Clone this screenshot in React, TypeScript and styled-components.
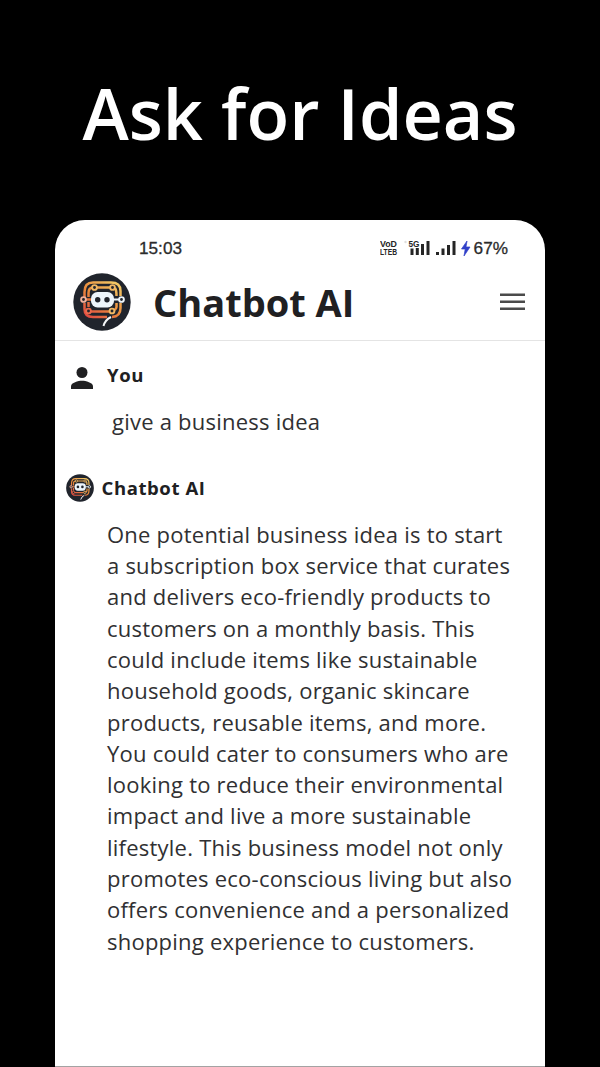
import React from 'react';
import styled, { createGlobalStyle } from 'styled-components';

const GlobalStyle = createGlobalStyle`
  * { box-sizing: border-box; }
  body { margin: 0; background: #000; font-family: 'Open Sans', 'Noto Sans', sans-serif; }
`;

const Page = styled.main`
  display: flex;
  flex-direction: column;
  align-items: center;
  width: 600px;
  height: 1067px;
  overflow: hidden;
  background: #000;
`;

const Headline = styled.h1`
  margin: 0;
  height: 220px;
  padding-top: 65px;
  color: #fff;
  font-size: 70px;
  font-weight: 600;
  line-height: 96px;
  white-space: nowrap;
`;

const Phone = styled.section`
  display: flex;
  flex-direction: column;
  width: 490px;
  height: 847px;
  background: #fff;
  border-bottom: 1px solid #a3a3a3;
  border-radius: 30px 30px 0 0;
  color: #202022;
`;

const StatusBar = styled.div`
  display: flex;
  align-items: center;
  justify-content: space-between;
  height: 44px;
  padding: 12px 37px 0 84px;
  font-family: 'Liberation Sans', sans-serif;
  font-size: 17.2px;
  line-height: 20px;
  color: #2b2b2b;
  -webkit-text-stroke: 0.3px #2b2b2b;
`;

const StatusRight = styled.div`
  display: flex;
  align-items: center;
  gap: 2px;
`;

const Header = styled.header`
  display: flex;
  align-items: center;
  height: 77px;
  padding: 0 20px 1px 18px;
  border-bottom: 1px solid #e4e4e4;
`;

const Brand = styled.h2`
  flex: 1;
  margin: 0 0 0 22px;
  font-size: 38px;
  font-weight: 700;
  line-height: 52px;
  white-space: nowrap;
`;

const Message = styled.article<{ $top: number; $left: number }>`
  padding: ${p => p.$top}px 0 0 ${p => p.$left}px;
`;

const Author = styled.div<{ $gap: number }>`
  display: flex;
  align-items: center;
  gap: ${p => p.$gap}px;
  height: 28px;
  font-size: 18.5px;
  font-weight: 700;
  line-height: 26px;
  letter-spacing: 0.6px;
  white-space: nowrap;
`;

const Name = styled.span<{ $lift?: number }>`
  padding-bottom: ${p => p.$lift || 0}px;
`;

const Copy = styled.p<{ $indent: number; $top: number }>`
  margin: ${p => p.$top}px 0 0 ${p => p.$indent}px;
  font-size: 22px;
  line-height: 31.3px;
  letter-spacing: 0.23px;
  color: #303032;
`;

const Line = styled.span`
  display: block;
  white-space: nowrap;
`;

const answer = [
  'One potential business idea is to start',
  'a subscription box service that curates',
  'and delivers eco-friendly products to',
  'customers on a monthly basis. This',
  'could include items like sustainable',
  'household goods, organic skincare',
  'products, reusable items, and more.',
  'You could cater to consumers who are',
  'looking to reduce their environmental',
  'impact and live a more sustainable',
  'lifestyle. This business model not only',
  'promotes eco-conscious living but also',
  'offers convenience and a personalized',
  'shopping experience to customers.',
];

const SignalIcons = () => (
  <svg width="92" height="20" viewBox="0 0 92 20" fill="#252525" stroke="none">
    <g fontFamily="Liberation Sans, sans-serif" fontWeight="700" fontSize="8.8">
      <text x="0" y="9" textLength="17" lengthAdjust="spacingAndGlyphs">VoD</text>
      <text x="0" y="17" textLength="17" lengthAdjust="spacingAndGlyphs">LTEB</text>
      <text x="28.500" y="9" textLength="11" lengthAdjust="spacingAndGlyphs">5G</text>
    </g>
    <circle cx="25.500" cy="4" r="1.200" fill="#dedede" />
    <path d="M30.500 10.500h3V17h-3zM35.800 10h3v7h-3zM41 6h3v11h-3zM46.500 3h3v14h-3z" />
    <path d="M56 14h3v3h-3zM61.500 10.500h3V17h-3zM67 7h3v10h-3zM72.500 3h3v14h-3z" />
    <path d="M87 3 81.500 11h3.700L84 18l6-9h-4z" fill="#3140c8" stroke="#3140c8" strokeWidth=".7" />
  </svg>
);

const BotLogo = ({ size }: { size: number }) => (
  <svg width={size} height={size} viewBox="0 0 58 58">
    <defs>
      <linearGradient id={`trace${size}`} gradientUnits="userSpaceOnUse" x1="14" y1="44" x2="40" y2="9">
        <stop offset="0" stopColor="#e04a42" />
        <stop offset=".5" stopColor="#ea8a3c" />
        <stop offset="1" stopColor="#f2c663" />
      </linearGradient>
    </defs>
    <circle cx="29" cy="29" r="28.700" fill="#20242c" />
    <g fill="none" stroke={`url(#trace${size})`} strokeWidth="2.500">
      <path d="M11.500 24V19Q11.500 9.500 20 9.500H38Q47.500 9.500 47.500 18V23" />
      <path d="M15.500 24V20Q15.500 14.500 20 14.500M24 14.500H37M42 15Q43.500 17 43.500 23" />
      <path d="M11.500 30V36Q11.500 44 20 44H34" />
      <path d="M17.500 38.500H36M15.500 29V34" />
      <path d="M47.500 30V35Q47.500 43.500 39 44" />
      <path d="M43.500 30V34Q43.500 36 41 37.500" />
      <path d="M13 26.500H18" />
    </g>
    <g fill="#20242c" stroke="#f0b764" strokeWidth="1.900">
      <circle cx="21.500" cy="14.500" r="2.400" />
      <circle cx="39.500" cy="14.500" r="2.400" />
      <circle cx="10.500" cy="26.500" r="2.400" stroke="#f0b09b" />
      <circle cx="15.500" cy="38" r="2.400" stroke="#e96a4d" />
      <circle cx="39" cy="38" r="2.400" />
    </g>
    <path d="M40 26.500H46" stroke="#eef5fa" strokeWidth="2" />
    <circle cx="48.500" cy="26.500" r="2.400" fill="#20242c" stroke="#eef5fa" strokeWidth="1.900" />
    <rect x="18" y="19" width="23" height="15.500" rx="6.500" fill="#edf5fb" />
    <circle cx="24.700" cy="26.700" r="2.700" fill="#20242c" />
    <circle cx="34" cy="26.700" r="2.700" fill="#20242c" />
    <path d="M38 44Q32 47 30.500 53" stroke="#f3f6f8" strokeWidth="2" fill="none" />
  </svg>
);

const MenuIcon = () => (
  <svg width="25" height="18" viewBox="0 0 25 18" fill="#4a4a4a">
    <path d="M0 .5h25v2.500H0zM0 7.500h25v2.500H0zM0 14.500h25v2.500H0z" />
  </svg>
);

const PersonIcon = () => (
  <svg width="22" height="22" viewBox="0 0 22 22" fill="#202022">
    <circle cx="11" cy="5.500" r="5.500" />
    <path d="M0 22v-2.750C0 15.600 7.300 13.750 11 13.750s11 1.850 11 5.500V22z" />
  </svg>
);

export default function App() {
  return (
    <>
      <GlobalStyle />
      <Page>
        <Headline>Ask for Ideas</Headline>
        <Phone>
          <StatusBar>
            <span>15:03</span>
            <StatusRight>
              <SignalIcons />
              <span>67%</span>
            </StatusRight>
          </StatusBar>
          <Header>
            <BotLogo size={58} />
            <Brand>Chatbot AI</Brand>
            <MenuIcon />
          </Header>
          <Message $top={23} $left={16}>
            <Author $gap={14}>
              <PersonIcon />
              <Name $lift={6}>You</Name>
            </Author>
            <Copy $top={14} $indent={41}>
              <Line>give a business idea</Line>
            </Copy>
          </Message>
          <Message $top={36.7} $left={10.5}>
            <Author $gap={8}>
              <BotLogo size={28} />
              <Name>Chatbot AI</Name>
            </Author>
            <Copy $top={16.8} $indent={41.5}>
              {answer.map(line => <Line key={line}>{line}</Line>)}
            </Copy>
          </Message>
        </Phone>
      </Page>
    </>
  );
}
